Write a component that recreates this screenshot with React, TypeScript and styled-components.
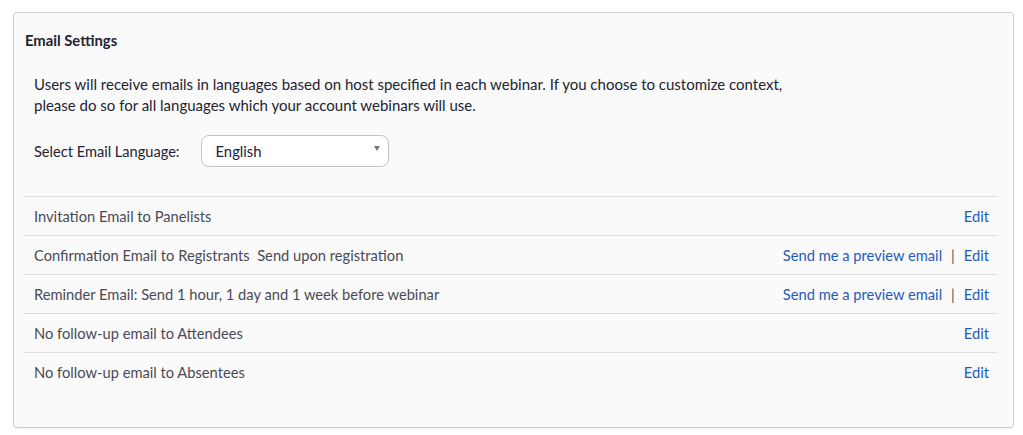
import styled, { createGlobalStyle } from "styled-components";

const GlobalStyle = createGlobalStyle`
  body {
    margin: 0;
    background: #ffffff;
    font-family: Lato, "Open Sans", sans-serif;
  }
`;

const Card = styled.div`
  margin: 12px 8px 8px 13px;
  width: 1001px;
  box-sizing: border-box;
  height: 416px;
  background: #fafafa;
  border: 1px solid #cfcfcf;
  border-radius: 4px;
  box-shadow: 0 1px 1px rgba(0, 0, 0, 0.06);
  padding: 18px 16px 0 10px;
`;

const Title = styled.div`
  margin-left: 1px;
  font-size: 14.8px;
  font-weight: 700;
  line-height: 18px;
  color: #232333;
`;

const Intro = styled.div`
  padding-left: 10px;
  margin-top: 25px;
  font-size: 15px;
  line-height: 21px;
  color: #232333;
`;

const LangRow = styled.div`
  display: flex;
  align-items: center;
  gap: 21px;
  padding-left: 10px;
  margin-top: 19px;
  font-size: 14.6px;
  color: #232333;
`;

const Select = styled.div`
  position: relative;
  width: 188px;
  height: 32px;
  box-sizing: border-box;
  border: 1px solid #c4c4c4;
  border-radius: 8px;
  background: #ffffff;
  display: flex;
  align-items: center;
  padding-left: 14px;
  font-size: 14.8px;
  color: #232333;
`;

const Caret = styled.span`
  position: absolute;
  right: 8px;
  top: 10px;
  width: 0;
  height: 0;
  border-left: 3px solid transparent;
  border-right: 3px solid transparent;
  border-top: 5px solid #777;
`;

const List = styled.div`
  margin-top: 29px;
  border-top: 1px solid #dedede;
`;

const Row = styled.div`
  display: flex;
  align-items: center;
  justify-content: space-between;
  height: 38px;
  border-bottom: 1px solid #dedede;
  padding: 0 8px 0 10px;
  font-size: 14.7px;
  color: #4a4a55;

  &:last-child {
    border-bottom: none;
  }
`;

const Actions = styled.div`
  display: flex;
  align-items: center;
  gap: 9px;
`;

const Link = styled.a`
  color: #1f5bbf;
  text-decoration: none;
  cursor: pointer;
`;

const Divider = styled.span`
  color: #555555;
`;

type Email = { label: string; preview?: boolean };

const emails: Email[] = [
  { label: "Invitation Email to Panelists" },
  { label: "Confirmation Email to Registrants\u00a0 Send upon registration", preview: true },
  { label: "Reminder Email: Send 1 hour, 1 day and 1 week before webinar", preview: true },
  { label: "No follow-up email to Attendees" },
  { label: "No follow-up email to Absentees" },
];

const App = () => {
  return (
    <>
      <GlobalStyle />
      <Card>
        <Title>Email Settings</Title>
        <Intro>
          Users will receive emails in languages based on host specified in each webinar. If you choose to customize context,
          <br />
          please do so for all languages which your account webinars will use.
        </Intro>
        <LangRow>
          <span>Select Email Language:</span>
          <Select>
            English
            <Caret />
          </Select>
        </LangRow>
        <List>
          {emails.map((e) => (
            <Row key={e.label}>
              <span>{e.label}</span>
              <Actions>
                {e.preview && (
                  <>
                    <Link>Send me a preview email</Link>
                    <Divider>|</Divider>
                  </>
                )}
                <Link>Edit</Link>
              </Actions>
            </Row>
          ))}
        </List>
      </Card>
    </>
  );
};

export default App;
